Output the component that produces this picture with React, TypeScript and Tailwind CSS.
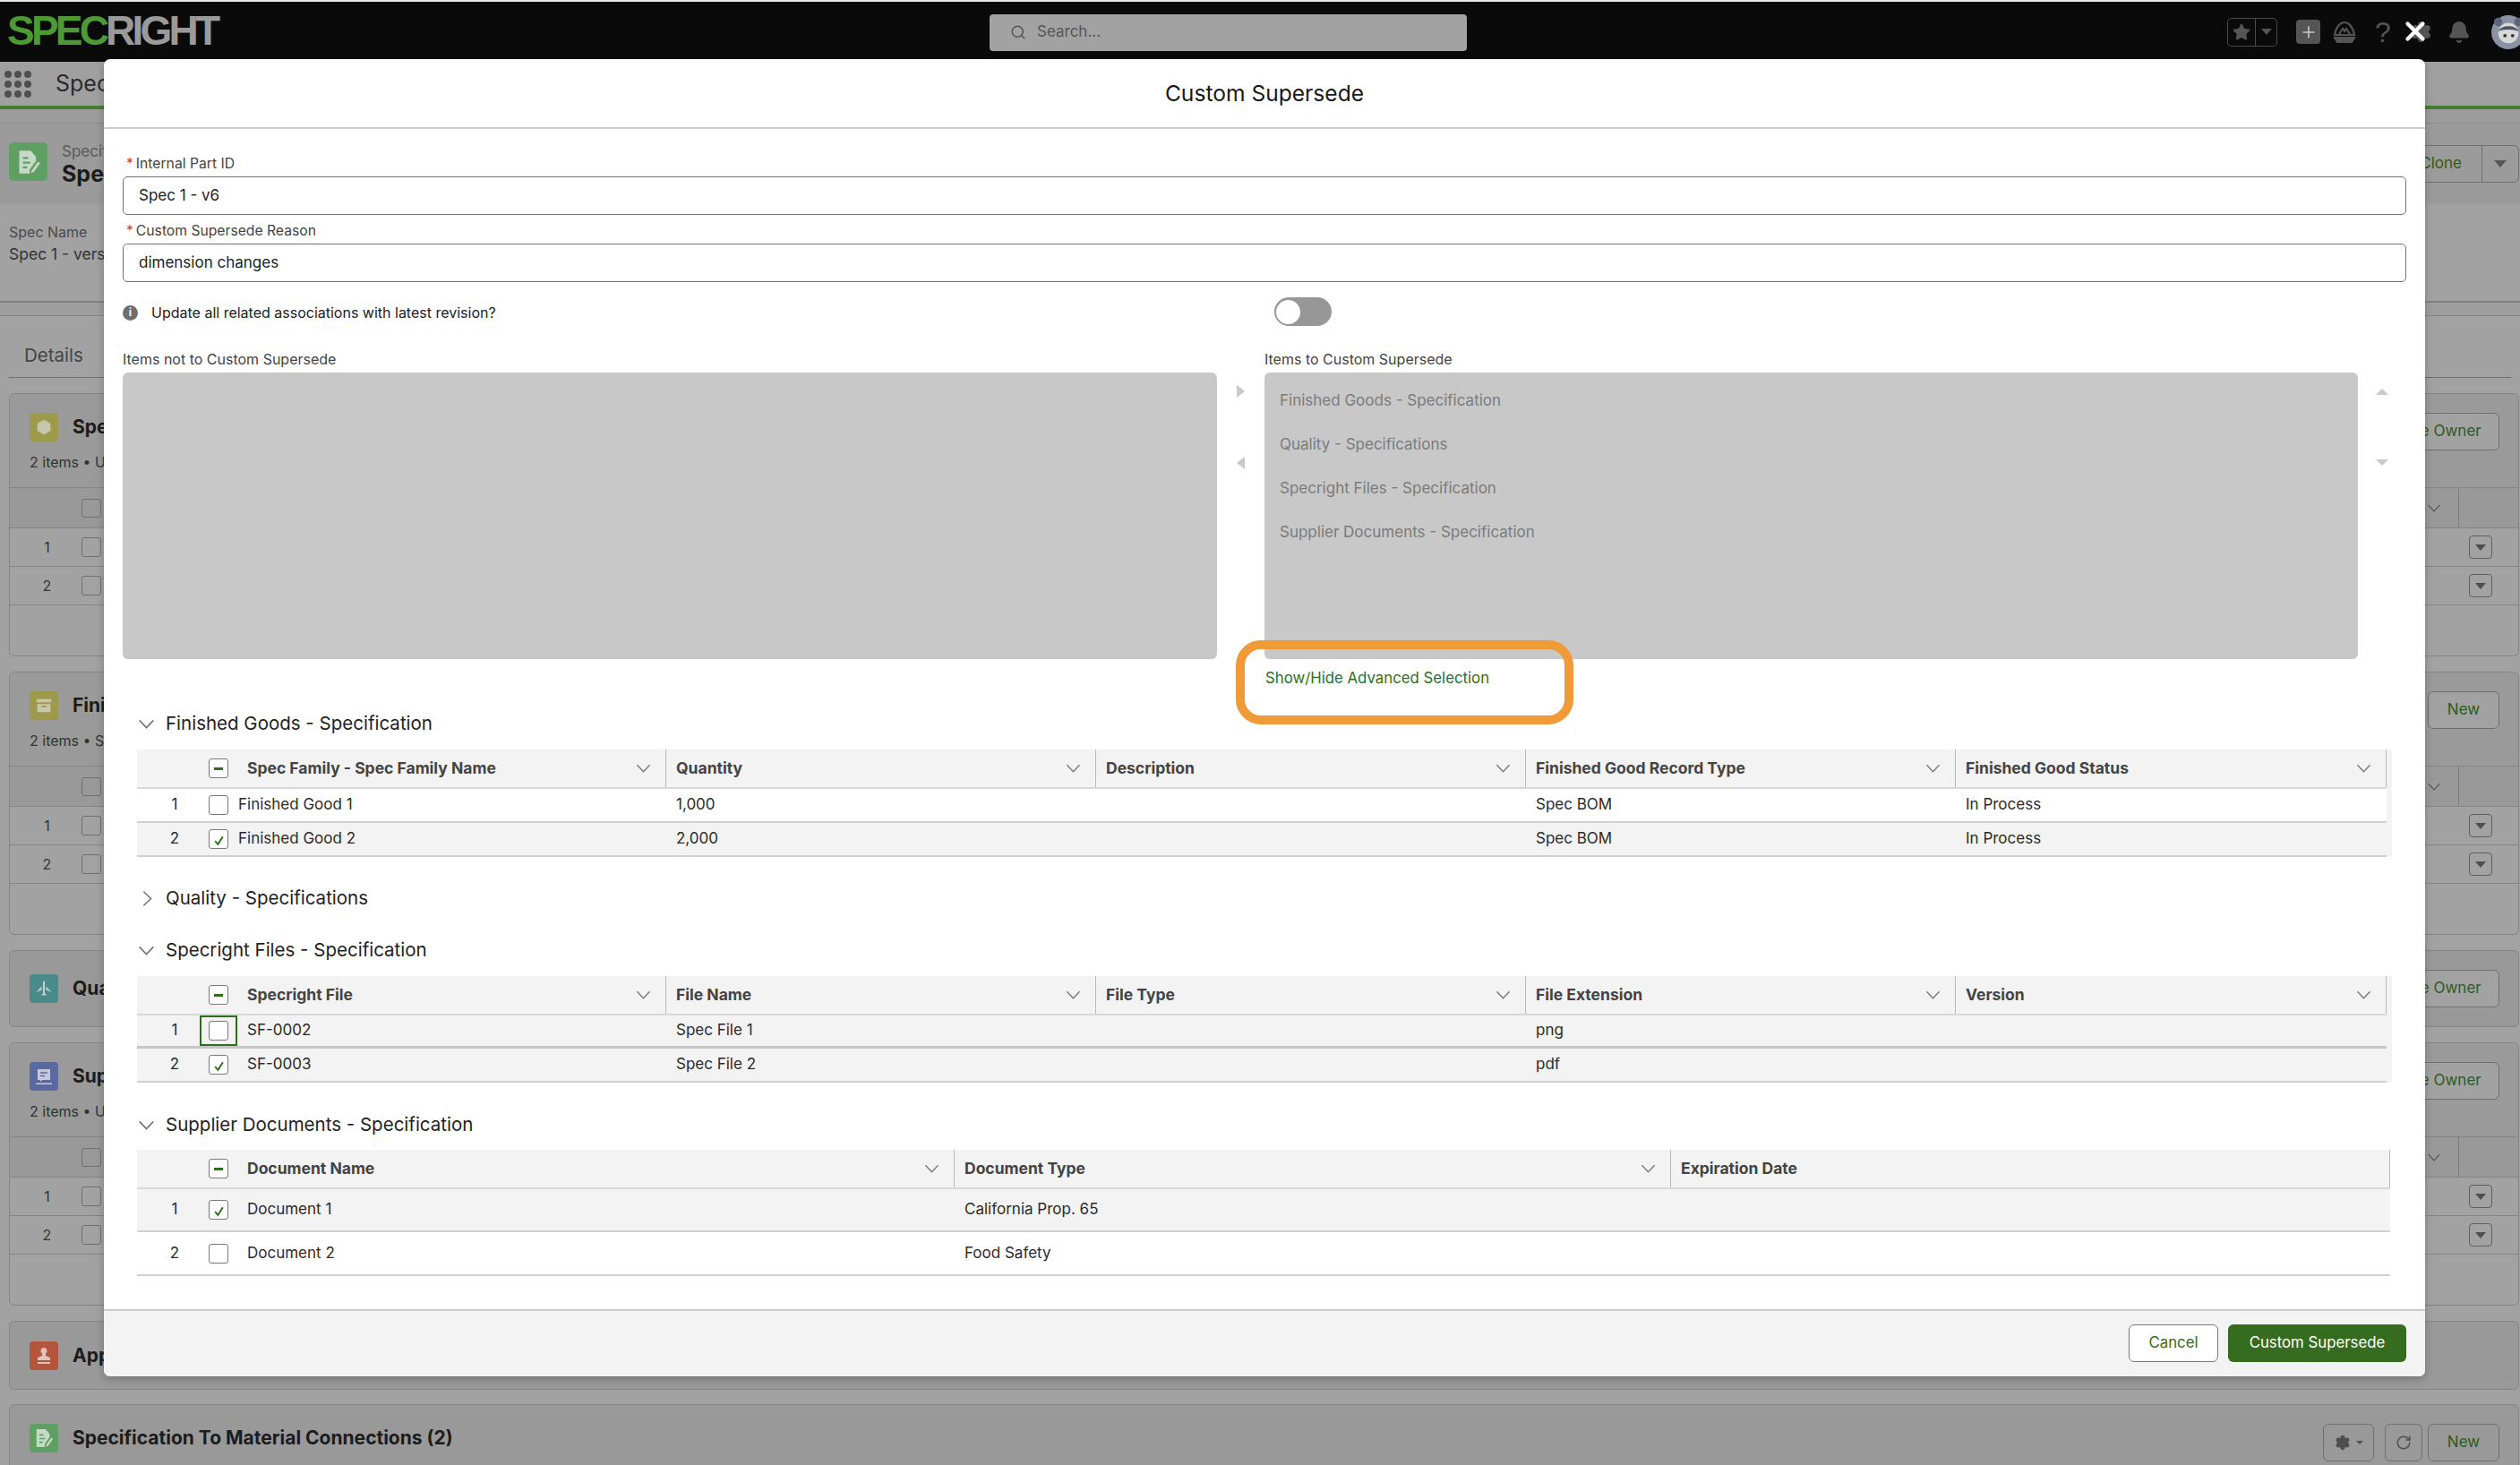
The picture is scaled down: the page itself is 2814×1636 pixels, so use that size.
import { Bell, Plus, RotateCw, Search, Settings, Star, X } from "lucide-react";
import type { ReactNode } from "react";

type Row = { num: number; checked: boolean; focused?: boolean; shaded: boolean; cells: string[] };

function Chevron({ className = "" }: { className?: string }) {
  return (
    <svg viewBox="0 0 20 12" className={className} fill="none" stroke="currentColor" strokeWidth="1.6">
      <path d="M1.5 1.5l8.5 9 8.5-9" />
    </svg>
  );
}

function Check({ mode }: { mode: "none" | "check" | "minus" }) {
  return (
    <span className="flex h-[22px] w-[22px] shrink-0 items-center justify-center rounded-[3px] border border-[#7a7a7a] bg-white">
      {mode === "minus" && <span className="h-[3px] w-[10px] bg-[#2e6f1c]" />}
      {mode === "check" && (
        <svg viewBox="0 0 12 12" className="mt-[3px] h-[13px] w-[13px]" fill="none" stroke="#2e6f1c" strokeWidth="1.8">
          <path d="M2 6.5l3 3.5 5-8" />
        </svg>
      )}
    </span>
  );
}

function DataTable({
  grid,
  headers,
  rows,
  textGap,
  rowHeights,
}: {
  grid: string;
  headers: { label: string; chevron: boolean }[];
  rows: Row[];
  textGap: string;
  rowHeights: string[];
}) {
  return (
    <div>
      <div className={`grid h-[44px] border-b-2 border-[#d8d8d8] bg-[#f3f3f3] ${grid}`}>
        {headers.map((h, i) => (
          <div key={h.label} className="flex items-center justify-between border-r border-[#b8b8b8] pr-[16px] pl-[11px] text-[17.5px] font-bold text-[#444444] first:pl-0">
            <div className="flex items-center">
              {i === 0 && (
                <>
                  <span className="w-[70px]" />
                  <span className="flex w-[42px] justify-center">
                    <Check mode="minus" />
                  </span>
                  <span className="w-[11px]" />
                </>
              )}
              {h.label}
            </div>
            {h.chevron && <Chevron className="h-[10px] w-[17px] text-[#777777]" />}
          </div>
        ))}
      </div>
      {rows.map((r, ri) => (
        <div
          key={r.num}
          className={`grid text-[17px] text-[#2b2b2b] ${grid} ${rowHeights[ri]} ${r.shaded ? "bg-[#f3f3f3]" : "bg-white"} ${r.focused ? "border-b-[3px] border-[#c6c6c6]" : "border-b-2 border-[#d0d0d0]"}`}
        >
          {r.cells.map((c, i) =>
            i === 0 ? (
              <div key={i} className="flex items-center">
                <span className="w-[70px] pl-[14px] text-center">{r.num}</span>
                <span className={`flex h-full w-[42px] items-center justify-center border-2 ${r.focused ? "border-[#2e6f1c]" : "border-transparent"}`}>
                  <Check mode={r.checked ? "check" : "none"} />
                </span>
                <span className={textGap}>{c}</span>
              </div>
            ) : (
              <div key={i} className="flex items-center pl-[11px]">
                {c}
              </div>
            ),
          )}
        </div>
      ))}
    </div>
  );
}

function Section({ title, open = true, className = "" }: { title: string; open?: boolean; className?: string }) {
  return (
    <div className={`flex h-[24px] items-center text-[20.5px] text-[#1f1f1f] ${className}`}>
      <span className="flex w-[32px] justify-start">
        {open ? (
          <Chevron className="ml-px h-[11px] w-[19px] text-[#6f6f6f]" />
        ) : (
          <Chevron className="ml-[2px] h-[11px] w-[19px] -rotate-90 text-[#6f6f6f]" />
        )}
      </span>
      {title}
    </div>
  );
}

function Field({ label, value, className = "" }: { label: string; value: string; className?: string }) {
  return (
    <div className={className}>
      <div className="flex h-[20px] items-center pl-[4px] text-[15.7px] text-[#444444]">
        <span className="mr-[3px] text-[#c23934]">*</span>
        {label}
      </div>
      <div className="mt-[4px] flex h-[43px] items-center rounded-[5px] border border-[#737373] pl-[17px] text-[17px] text-[#222222]">{value}</div>
    </div>
  );
}

function DimButton({ children, className = "" }: { children: ReactNode; className?: string }) {
  return (
    <div className={`flex h-[42px] items-center justify-center rounded-[6px] border border-[#6f6f6f] bg-[#a2a2a2] text-[17px] text-[#2f5a20] ${className}`}>
      {children}
    </div>
  );
}

function IconBox({ color, children }: { color: string; children: ReactNode }) {
  return <div className={`flex h-[32px] w-[32px] shrink-0 items-center justify-center rounded-[4px] ${color}`}>{children}</div>;
}

function DocIcon({ className }: { className: string }) {
  return (
    <svg viewBox="0 0 24 24" className={className} fill="#c6d8c6">
      <path d="M3 1h11l5 6v4l-6 8v4H3z" />
      <path d="M6.5 8h5M6.5 12.5h7M6.5 17h4" stroke="#5f9f63" strokeWidth="1.8" />
      <path d="M15 20l6-8.5 2 1.5-6 8.5-2.5.8z" />
    </svg>
  );
}

function TableCard({
  icon,
  title,
  sub,
  action,
  actionClass,
  className = "",
}: {
  icon: ReactNode;
  title: string;
  sub: string;
  action: string;
  actionClass: string;
  className?: string;
}) {
  return (
    <div className={`h-[294px] rounded-[6px] border border-[#858585] bg-[#a2a2a2] ${className}`}>
      <div className="flex h-[105px] justify-between rounded-t-[6px] border-b border-[#858585] bg-[#9a9a9a] pt-[21px] pr-[21px] pl-[22px]">
        <div>
          <div className="flex h-[32px] items-center gap-[16px] text-[21px] font-bold text-[#1c1c1c]">
            {icon}
            {title}
          </div>
          <div className="mt-[11px] text-[16px] text-[#333333]">{sub}</div>
        </div>
        <DimButton className={actionClass}>{action}</DimButton>
      </div>
      <div className="flex h-[45px] items-center justify-between border-b border-[#858585] bg-[#999999] pl-[80px]">
        <span className="h-[21px] w-[22px] rounded-[3px] border border-[#6f6f6f]" />
        <div className="flex h-full items-center">
          <Chevron className="mr-[19px] h-[9px] w-[16px] text-[#555555]" />
          <span className="h-full w-[67px] border-l border-[#7d7d7d]" />
        </div>
      </div>
      {[1, 2].map((n) => (
        <div key={n} className="flex h-[43px] items-center justify-between border-b border-[#858585] pr-[29px] text-[16px] text-[#333333]">
          <div className="flex items-center">
            <span className="w-[80px] pl-[3px] text-center">{n}</span>
            <span className="h-[22px] w-[22px] rounded-[3px] border border-[#6f6f6f]" />
          </div>
          <span className="flex h-[26px] w-[26px] items-center justify-center rounded-[4px] border border-[#5f5f5f]">
            <span className="h-0 w-0 border-x-[6px] border-t-[7px] border-x-transparent border-t-[#4f4f4f]" />
          </span>
        </div>
      ))}
    </div>
  );
}

function CompactCard({
  icon,
  title,
  className = "",
  children,
}: {
  icon: ReactNode;
  title: string;
  className?: string;
  children?: ReactNode;
}) {
  return (
    <div className={`flex justify-between rounded-[6px] border border-[#858585] bg-[#999999] pr-[21px] pl-[22px] ${className}`}>
      <div className="flex items-center gap-[16px] text-[21px] font-bold text-[#1c1c1c]">
        {icon}
        {title}
      </div>
      {children}
    </div>
  );
}

const finishedRows: Row[] = [
  { num: 1, checked: false, shaded: false, cells: ["Finished Good 1", "1,000", "", "Spec BOM", "In Process"] },
  { num: 2, checked: true, shaded: true, cells: ["Finished Good 2", "2,000", "", "Spec BOM", "In Process"] },
];
const fileRows: Row[] = [
  { num: 1, checked: false, focused: true, shaded: true, cells: ["SF-0002", "Spec File 1", "", "png", ""] },
  { num: 2, checked: true, shaded: true, cells: ["SF-0003", "Spec File 2", "", "pdf", ""] },
];
const docRows: Row[] = [
  { num: 1, checked: true, shaded: true, cells: ["Document 1", "California Prop. 65", ""] },
  { num: 2, checked: false, shaded: false, cells: ["Document 2", "Food Safety", ""] },
];

const hd = (label: string, chevron = true) => ({ label, chevron });

function Modal() {
  return (
    <div className="absolute top-[66px] left-[116px] flex h-[1471px] w-[2592px] flex-col rounded-[7px] bg-white shadow-[0_3px_8px_rgba(0,0,0,0.25)]">
      <div className="flex h-[78px] shrink-0 items-center justify-center border-b-2 border-[#cccccc] text-[24.6px] text-[#181818]">Custom Supersede</div>
      <div className="relative flex-1 px-[21px] pt-[29px]">
        <Field label="Internal Part ID" value="Spec 1 - v6" />
        <Field label="Custom Supersede Reason" value="dimension changes" className="mt-[8px]" />
        <div className="mt-[22px] flex h-[24px] items-center text-[16px] text-[#222222]">
          <span className="flex h-[17px] w-[17px] items-center justify-center rounded-full bg-[#6f6f6f] text-[12px] font-bold text-white">i</span>
          <span className="ml-[15px] w-[1254px]">Update all related associations with latest revision?</span>
          <span className="mt-[-2px] flex h-[32px] w-[64px] items-center rounded-full bg-[#979797] pl-[2px]">
            <span className="h-[27px] w-[27px] rounded-full bg-white" />
          </span>
        </div>
        <div className="mt-[30px] flex">
          <div className="w-[1222px]">
            <div className="h-[20px] text-[16px] leading-[20px] text-[#444444]">Items not to Custom Supersede</div>
            <div className="mt-[5px] h-[320px] rounded-[6px] bg-[#c8c8c8]" />
          </div>
          <div className="flex w-[53px] flex-col pt-[39px] pl-[22px]">
            <span className="h-0 w-0 border-y-[7px] border-l-[9px] border-y-transparent border-l-[#c9c9c9]" />
            <span className="mt-[66px] h-0 w-0 border-y-[7px] border-r-[9px] border-y-transparent border-r-[#c9c9c9]" />
          </div>
          <div className="w-[1221px]">
            <div className="h-[20px] text-[16px] leading-[20px] text-[#444444]">Items to Custom Supersede</div>
            <div className="mt-[5px] flex h-[320px] flex-col gap-[25px] rounded-[6px] bg-[#c8c8c8] pt-[19px] pl-[17px] text-[17px] leading-[24px] text-[#7b7b7b]">
              <span>Finished Goods - Specification</span>
              <span>Quality - Specifications</span>
              <span>Specright Files - Specification</span>
              <span>Supplier Documents - Specification</span>
            </div>
          </div>
          <div className="flex flex-col pt-[43px] pl-[20px]">
            <span className="h-0 w-0 border-x-[7px] border-b-[7px] border-x-transparent border-b-[#c9c9c9]" />
            <span className="mt-[72px] h-0 w-0 border-x-[7px] border-t-[7px] border-x-transparent border-t-[#c9c9c9]" />
          </div>
        </div>
        <div className="mt-[11px] ml-[1276px] h-[20px] text-[16.8px] leading-[20px] text-[#2e6f1c]">Show/Hide Advanced Selection</div>
        <div className="absolute top-[571px] left-[1264px] h-[94px] w-[377px] rounded-[28px] border-[10px] border-[#f09a38]" />

        <div className="pl-[16px]">
          <Section title="Finished Goods - Specification" className="mt-[29px]" />
          <div className="mt-[17px] w-[2518px] bg-[#f3f3f3]">
            <div className="w-[2512px]">
              <DataTable
                grid="grid-cols-[591px_480px_480px_480px_481px]"
                headers={[hd("Spec Family - Spec Family Name"), hd("Quantity"), hd("Description"), hd("Finished Good Record Type"), hd("Finished Good Status")]}
                rows={finishedRows}
                textGap="ml-[1px]"
                rowHeights={["h-[38px]", "h-[38px]"]}
              />
            </div>
          </div>
          <Section title="Quality - Specifications" open={false} className="mt-[34px]" />
          <Section title="Specright Files - Specification" className="mt-[34px]" />
          <div className="mt-[17px] w-[2518px] bg-[#f3f3f3]">
            <div className="w-[2512px]">
              <DataTable
                grid="grid-cols-[591px_480px_480px_480px_481px]"
                headers={[hd("Specright File"), hd("File Name"), hd("File Type"), hd("File Extension"), hd("Version")]}
                rows={fileRows}
                textGap="ml-[11px]"
                rowHeights={["h-[37px]", "h-[38px]"]}
              />
            </div>
          </div>
          <Section title="Supplier Documents - Specification" className="mt-[35px]" />
          <div className="mt-[16px] w-[2516px]">
            <DataTable
              grid="grid-cols-[913px_800px_803px]"
              headers={[hd("Document Name"), hd("Document Type"), hd("Expiration Date", false)]}
              rows={docRows}
              textGap="ml-[11px]"
              rowHeights={["h-[48px]", "h-[49px]"]}
            />
          </div>
        </div>
      </div>
      <div className="flex h-[75px] shrink-0 items-start justify-end gap-[11px] rounded-b-[7px] border-t-2 border-[#cccccc] bg-[#f3f3f3] pt-[15px] pr-[21px] text-[16.8px]">
        <button className="flex h-[42px] w-[100px] items-center justify-center rounded-[6px] border border-[#7a7a7a] bg-white text-[#2e6f1c]">Cancel</button>
        <button className="flex h-[42px] w-[199px] items-center justify-center rounded-[6px] bg-[#366c20] text-white">Custom Supersede</button>
      </div>
    </div>
  );
}

function TopBar() {
  return (
    <div className="flex h-[67px] items-center bg-[#0a0a0a]">
      <div className="mt-[-2px] ml-[8px] w-[1097px] shrink-0 font-['Liberation_Sans',sans-serif] text-[46px] font-bold tracking-[-3.8px]">
        <span className="text-[#4c9a34]">SPEC</span>
        <span className="text-[#9a9a9a]">RIGHT</span>
      </div>
      <div className="mt-[1px] flex h-[41px] w-[533px] shrink-0 items-center gap-[12px] rounded-[4px] bg-[#a2a2a2] pl-[23px] text-[17px] text-[#555555]">
        <Search className="h-[18px] w-[18px]" />
        Search...
      </div>
      <div className="ml-[849px] flex h-[32px] w-[56px] shrink-0 items-center rounded-[5px] border border-[#4a4a4a]">
        <span className="flex h-full w-[31px] items-center justify-center border-r border-[#4a4a4a]">
          <Star className="h-[20px] w-[20px] fill-[#555555] text-[#555555]" />
        </span>
        <span className="ml-[6px] h-0 w-0 border-x-[6px] border-t-[7px] border-x-transparent border-t-[#555555]" />
      </div>
      <span className="ml-[21px] flex h-[27px] w-[27px] shrink-0 items-center justify-center rounded-[4px] bg-[#555555]">
        <Plus className="h-[20px] w-[20px] text-[#c8c8c8]" />
      </span>
      <svg viewBox="0 0 26 26" className="ml-[14px] h-[26px] w-[26px] shrink-0" fill="none" stroke="#555555" strokeWidth="2.2">
        <path d="M2 16C3 8 8 2 13 2s10 6 11 14z" />
        <path d="M7 15l4-6 2 3 2-3 4 6" />
        <path d="M2 19h22l-3 5H5z" fill="#555555" />
      </svg>
      <span className="ml-[21px] w-[18px] shrink-0 font-['Liberation_Sans',sans-serif] text-[32px] leading-none text-[#555555]">?</span>
      <span className="relative ml-[20px] flex h-[26px] w-[26px] shrink-0 items-center justify-center">
        <Settings className="h-[25px] w-[25px] fill-[#555555] text-[#555555]" />
        <X className="absolute top-[-5px] left-[-10px] h-[34px] w-[34px] text-white" strokeWidth={3} />
      </span>
      <Bell className="ml-[17px] h-[26px] w-[26px] shrink-0 fill-[#555555] text-[#555555]" />
      <svg viewBox="0 0 40 44" className="ml-[23px] h-[44px] w-[38px] shrink-0">
        <circle cx="20" cy="22" r="20" fill="#8a93a3" />
        <circle cx="8" cy="10" r="5" fill="#5d6678" />
        <circle cx="32" cy="10" r="5" fill="#5d6678" />
        <circle cx="20" cy="23" r="12" fill="#d8d8d8" />
        <path d="M8 21c3-8 21-8 24 0-6-3-18-3-24 0z" fill="#4d5566" />
        <circle cx="16" cy="26" r="2" fill="#333333" />
        <circle cx="25" cy="26" r="2" fill="#333333" />
      </svg>
    </div>
  );
}

export default function App() {
  return (
    <div className="relative h-[1636px] w-[2814px] overflow-hidden bg-[#a2a2a2] font-['Inter',sans-serif]">
      <div className="h-[2px] bg-[#e8e8e8]" />
      <TopBar />
      <div className="flex h-[53px] items-center border-b-4 border-[#477d31] bg-[#a0a0a0]">
        <div className="ml-[5px] grid grid-cols-3 gap-x-[3px] gap-y-[3px]">
          {Array.from({ length: 9 }, (_, i) => (
            <span key={i} className="h-[8px] w-[8px] rounded-full bg-[#4f4f4f]" />
          ))}
        </div>
        <span className="ml-[27px] text-[25px] text-[#2b2b2b]">Spec</span>
      </div>
      <div className="h-[16px] border-b border-[#8a8a8a] bg-[#9c9c9c]" />
      <div className="flex h-[90px] justify-between bg-[#9b9b9b] pt-[21px] pl-[10px]">
        <div className="flex gap-[16px]">
          <div className="flex h-[43px] w-[43px] items-center justify-center rounded-[5px] bg-[#5f9f63]">
            <DocIcon className="h-[28px] w-[28px]" />
          </div>
          <div>
            <div className="text-[17px] leading-[20px] text-[#5a5a5a]">Specifi</div>
            <div className="text-[25px] leading-[30px] font-bold text-[#1c1c1c]">Spe</div>
          </div>
        </div>
        <div className="mt-[3px] mr-[1px] flex h-[42px] w-[140px] items-center justify-end rounded-[6px] border border-[#6f6f6f] text-[17px] text-[#2f5a20]">
          <span className="mr-[22px]">Clone</span>
          <span className="flex h-full w-[41px] items-center justify-center border-l border-[#6f6f6f]">
            <span className="h-0 w-0 border-x-[7px] border-t-[8px] border-x-transparent border-t-[#555555]" />
          </span>
        </div>
      </div>
      <div className="flex h-[110px] flex-col border-b-2 border-[#7f7f7f] bg-[#a2a2a2] pt-[19px] pl-[10px]">
        <div className="text-[16px] text-[#4a4a4a]">Spec Name</div>
        <div className="text-[17.5px] text-[#333333]">Spec 1 - vers</div>
      </div>
      <div className="h-[15px] border-b border-[#858585] bg-[#9e9e9e]" />
      <div className="mx-[10px] flex h-[69px] items-end border-b border-[#6f6f6f] pb-[8px] pl-[17px] text-[20.5px] text-[#444444]">Details</div>

      <div className="mt-[17px] ml-[10px] flex w-[2803px] flex-col">
        <TableCard
          icon={
            <IconBox color="bg-[#9e9a4c]">
              <svg viewBox="0 0 24 24" className="h-[22px] w-[22px]" fill="#c7c7ac">
                <path d="M12 3l8 4.5v9L12 21l-8-4.5v-9z" />
              </svg>
            </IconBox>
          }
          title="Spe"
          sub="2 items • U"
          action="Change Owner"
          actionClass="w-[161px]"
        />
        <TableCard
          className="mt-[17px]"
          icon={
            <IconBox color="bg-[#9e9a4c]">
              <svg viewBox="0 0 24 24" className="h-[22px] w-[22px]" fill="#c7c7ac">
                <path d="M3 4h18v4H3zM4 10h16v10H4z" />
                <path d="M9 13h6" stroke="#9e9a4c" strokeWidth="2" />
              </svg>
            </IconBox>
          }
          title="Fini"
          sub="2 items • S"
          action="New"
          actionClass="w-[80px]"
        />
        <CompactCard
          className="mt-[17px] h-[86px] items-center"
          icon={
            <IconBox color="bg-[#4a8a8a]">
              <svg viewBox="0 0 24 24" className="h-[24px] w-[24px]" fill="#bcd2d2">
                <path d="M11 4.5c0-1.5 2-1.5 2 0V17l2 2.5H9L11 17z" />
                <path d="M9.5 9.5v4L3.5 16zM14.5 9.5v4l6 2.5z" />
              </svg>
            </IconBox>
          }
          title="Qua"
        >
          <DimButton className="w-[161px]">Change Owner</DimButton>
        </CompactCard>
        <TableCard
          className="mt-[17px]"
          icon={
            <IconBox color="bg-[#5a6aa0]">
              <svg viewBox="0 0 24 24" className="h-[24px] w-[24px]" fill="#c4cadc">
                <path d="M5 4h14v12h-9l-2 2v-2H5z" />
                <path d="M8 8h8M8 11.5h5" stroke="#5a6aa0" strokeWidth="1.6" />
                <path d="M3 19.5h18v1.5H3z" />
              </svg>
            </IconBox>
          }
          title="Sup"
          sub="2 items • U"
          action="Change Owner"
          actionClass="w-[161px]"
        />
        <CompactCard
          className="mt-[17px] h-[77px] items-center"
          icon={
            <IconBox color="bg-[#b3553a]">
              <svg viewBox="0 0 24 24" className="h-[24px] w-[24px]" fill="#e0c4bb">
                <path d="M12 3a3.5 3.5 0 0 1 2 6.4V12l5 2v3H5v-3l5-2V9.4A3.5 3.5 0 0 1 12 3zM5 19h14v2H5z" />
              </svg>
            </IconBox>
          }
          title="App"
        />
        <CompactCard
          className="mt-[16px] h-[120px] items-start pt-[21px]"
          icon={
            <IconBox color="bg-[#5f9f63]">
              <DocIcon className="h-[22px] w-[22px]" />
            </IconBox>
          }
          title="Specification To Material Connections (2)"
        >
          <div className="flex">
            <div className="flex h-[42px] w-[57px] items-center justify-center gap-[6px] rounded-[6px] border border-[#6f6f6f]">
              <Settings className="h-[18px] w-[18px] fill-[#4f4f4f] text-[#4f4f4f]" />
              <span className="h-0 w-0 border-x-[4px] border-t-[4px] border-x-transparent border-t-[#4f4f4f]" />
            </div>
            <div className="ml-[12px] flex h-[42px] w-[42px] items-center justify-center rounded-[6px] border border-[#6f6f6f]">
              <RotateCw className="h-[18px] w-[18px] text-[#4f4f4f]" />
            </div>
            <div className="ml-[6px] flex h-[42px] w-[80px] items-center justify-center rounded-[6px] border border-[#6f6f6f] text-[17px] text-[#2f5a20]">New</div>
          </div>
        </CompactCard>
      </div>
      <Modal />
    </div>
  );
}
